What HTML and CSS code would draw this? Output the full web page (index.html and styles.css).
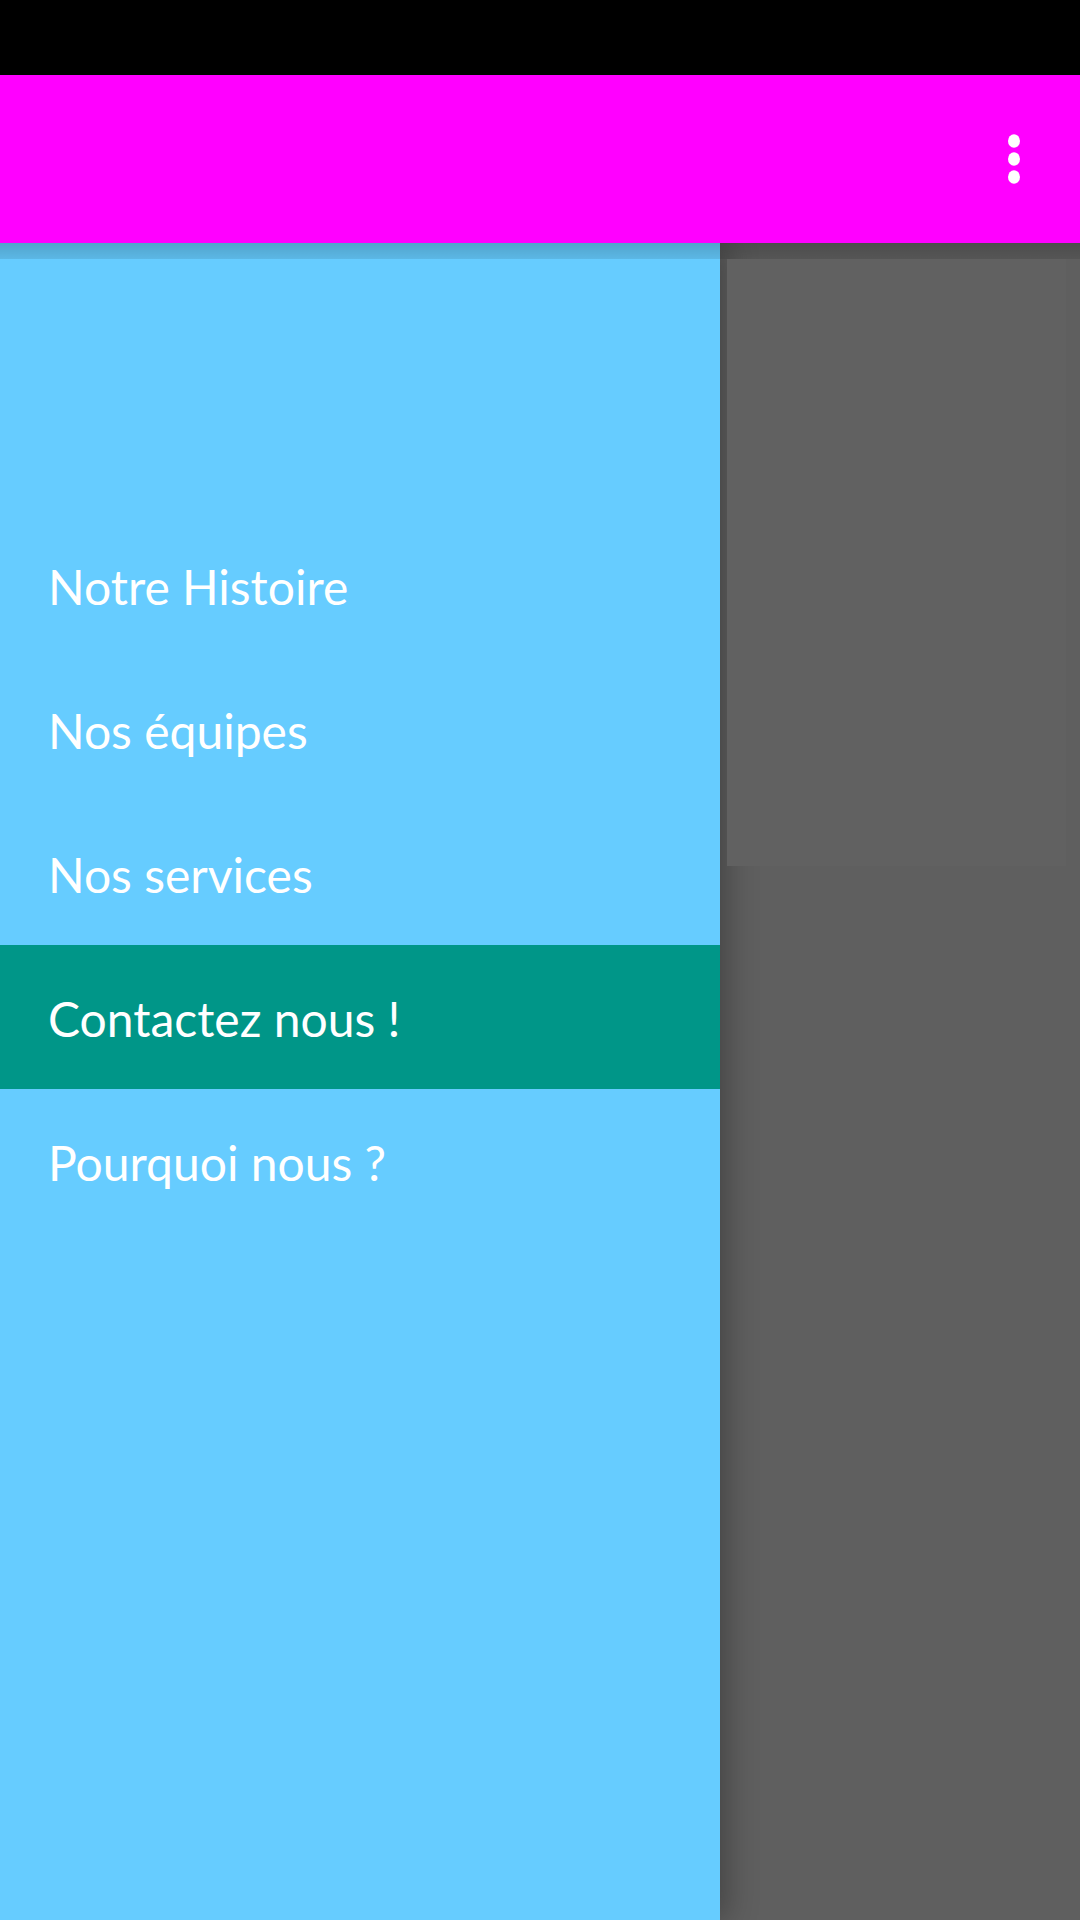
FILE: index.html
```html
<!DOCTYPE html>
<html lang="fr">
<head>
<meta charset="utf-8">
<title>Menu</title>
<link rel="stylesheet" href="styles.css">
</head>
<body>
<div class="screen">
  <div class="statusbar"></div>
  <header class="toolbar">
    <svg class="overflow" width="14" height="50" viewBox="0 0 14 50" aria-label="Plus d'options">
      <ellipse cx="7" cy="7" rx="6" ry="6.8" fill="#fff"/>
      <ellipse cx="7" cy="25" rx="6" ry="6.8" fill="#fff"/>
      <ellipse cx="7" cy="43" rx="6" ry="6.8" fill="#fff"/>
    </svg>
  </header>
  <div class="main">
    <nav class="drawer">
      <ul class="menu">
        <li class="item">Notre Histoire</li>
        <li class="item">Nos équipes</li>
        <li class="item">Nos services</li>
        <li class="item active">Contactez nous !</li>
        <li class="item">Pourquoi nous ?</li>
      </ul>
    </nav>
    <section class="content">
      <div class="card"></div>
    </section>
  </div>
</div>
</body>
</html>
```
FILE: styles.css
```css
html, body {
  margin: 0;
  padding: 0;
  background: #000;
}
.screen {
  width: 1080px;
  height: 1920px;
  display: flex;
  flex-direction: column;
  overflow: hidden;
  font-family: Lato, "Open Sans", sans-serif;
}
.statusbar {
  height: 75px;
  background: #000;
  flex: none;
}
.toolbar {
  height: 168px;
  flex: none;
  background: #ff00ff;
  display: flex;
  align-items: center;
  justify-content: flex-end;
  padding-right: 59px;
  box-sizing: border-box;
  position: relative;
  z-index: 5;
}
.toolbar::after {
  content: "";
  position: absolute;
  left: 0;
  right: 0;
  top: 100%;
  height: 16px;
  background: linear-gradient(to bottom, rgba(0,0,0,0.2), rgba(0,0,0,0.1));
  pointer-events: none;
}
.overflow {
  display: block;
}
.main {
  flex: 1;
  display: flex;
  position: relative;
}
.drawer {
  width: 720px;
  flex: none;
  background: #66ccff;
  position: relative;
  z-index: 2;
  box-shadow: 6px 0 30px rgba(0,0,0,0.3);
}
.menu {
  list-style: none;
  margin: 0;
  padding: 270px 0 0 0;
}
.item {
  height: 144px;
  box-sizing: border-box;
  display: flex;
  align-items: center;
  padding: 3px 0 0 48px;
  color: #fff;
  font-size: 48px;
}
.item.active {
  background: #009688;
}
.content {
  flex: 1;
  background: #5f5f5f;
  padding: 16px 14px 0 7px;
}
.card {
  height: 607px;
  background: #616161;
  position: relative;
  z-index: 3;
}
```
